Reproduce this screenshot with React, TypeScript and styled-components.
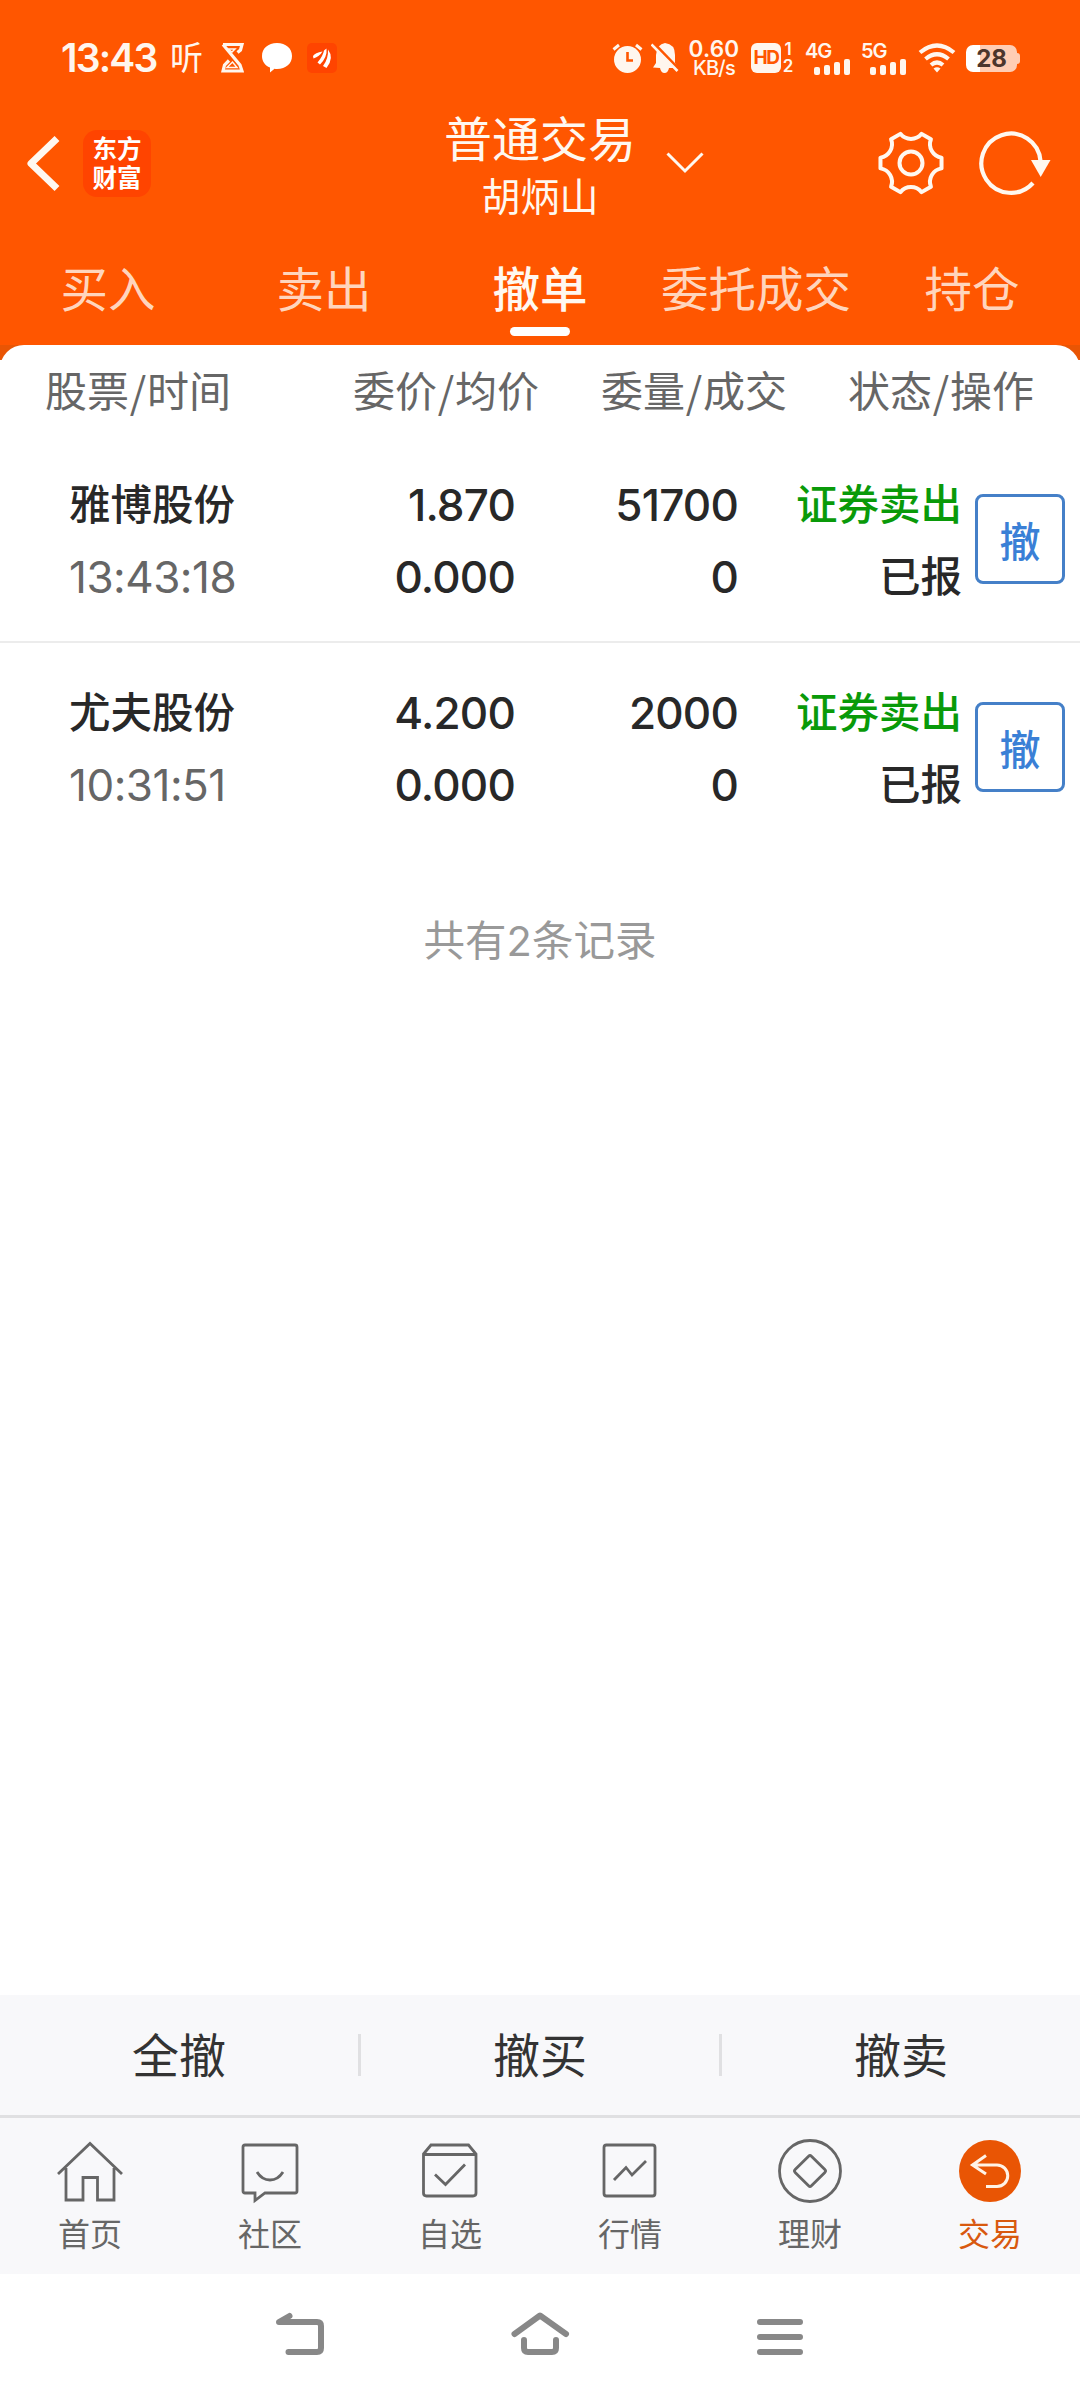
import React from 'react';
import styled, { createGlobalStyle } from 'styled-components';

const GlobalStyle = createGlobalStyle`
  * { box-sizing: border-box; }
  body {
    margin: 0;
    background: #fff;
    font-family: Inter, 'Noto Sans CJK SC', sans-serif;
    color: #282828;
  }
  svg { display: block; flex: none; }
`;

const Screen = styled.div`
  width: 1080px;
  height: 2400px;
  display: flex;
  flex-direction: column;
  background: #fff;
  overflow: hidden;
`;

const Top = styled.header`
  background: #ff5600;
  height: 345px;
  flex: none;
  display: flex;
  flex-direction: column;
`;

const StatusBar = styled.div`
  height: 100px;
  padding: 16px 60px 0 61px;
  display: flex;
  align-items: center;
  justify-content: space-between;
  color: #fff6ee;
`;

const StatusGroup = styled.div`
  display: flex;
  align-items: center;
`;

const Clock = styled.span`
  font-size: 39px;
  font-weight: 600;
  line-height: 40px;
  letter-spacing: -1.8px;
  width: 109px;
`;

const Gap = styled.span<{ $w: number }>`
  width: ${(p) => p.$w}px;
  flex: none;
`;

const ThinGlyph = styled.span`
  font-size: 33px;
  font-weight: 400;
  line-height: 32px;
  width: 51px;
`;

const Speed = styled.div`
  width: 52px;
  display: flex;
  flex-direction: column;
  align-items: center;
  font-weight: 600;
  line-height: 18px;
  font-size: 22.5px;
  letter-spacing: 0.2px;
`;

const SpeedValue = styled.span`
  font-size: 22.5px;
  height: 18px;
`;

const SpeedUnit = styled.span`
  font-size: 20px;
  height: 18px;
  line-height: 20px;
  font-weight: 500;
  letter-spacing: -0.8px;
`;

const HdBox = styled.span`
  width: 30px;
  height: 30px;
  border-radius: 6px;
  background: #fff6ee;
  color: #ff5600;
  font-size: 19px;
  font-weight: 700;
  letter-spacing: -1.4px;
  line-height: 30px;
  text-align: center;
`;

const SimNumbers = styled.span`
  width: 14px;
  display: flex;
  flex-direction: column;
  align-items: center;
  font-size: 17px;
  font-weight: 600;
  line-height: 17px;
`;

const Signal = styled.div`
  width: 45px;
  height: 33px;
  display: flex;
  flex-direction: column;
  align-items: flex-start;
  justify-content: space-between;
  font-size: 20px;
  font-weight: 600;
  letter-spacing: -1px;
  line-height: 18px;
`;

const Bars = styled.span`
  display: flex;
  align-items: flex-end;
  align-self: flex-end;
  gap: 4px;
  height: 17px;
  margin-top: -4px;
`;

const Bar = styled.i<{ $h: number }>`
  width: 6px;
  height: ${(p) => p.$h}px;
  border-radius: 2px;
  background: #fff6ee;
`;

const Battery = styled.span`
  width: 51px;
  height: 27px;
  border-radius: 7px;
  background: linear-gradient(90deg, #fff 0 28%, #ffcdb4 28%);
  color: #4d352c;
  font-size: 24px;
  font-weight: 700;
  line-height: 27px;
  text-align: center;
`;

const BatteryTip = styled.span`
  width: 3px;
  height: 11px;
  border-radius: 0 3px 3px 0;
  background: #ffcdb4;
`;

const TitleBar = styled.div`
  height: 140px;
  flex: none;
  display: grid;
  grid-template-columns: 400px 265px 415px;
`;

const TitleLeft = styled.div`
  display: flex;
  align-items: flex-start;
  padding: 30px 0 0 25px;
`;

const Logo = styled.div`
  width: 68px;
  height: 67px;
  margin-left: 22px;
  border-radius: 14px;
  background: #ff4400;
  color: #fff;
  display: flex;
  flex-direction: column;
  align-items: center;
  justify-content: center;
  gap: 1px;
  font-size: 24.5px;
  font-weight: 700;
  line-height: 28px;
`;

const LogoLine = styled.span`
  height: 28px;
  overflow: hidden;
`;

const TitleText = styled.div`
  display: flex;
  flex-direction: column;
  align-items: center;
  width: 280px;
  color: #fff8f0;
`;

const Title = styled.h1`
  margin: 15px 0 0;
  font-size: 48px;
  font-weight: 400;
  line-height: 50px;
  white-space: nowrap;
`;

const Subtitle = styled.div`
  margin-top: 9px;
  font-size: 39px;
  line-height: 46px;
`;

const TitleRight = styled.div`
  display: flex;
  align-items: flex-start;
  padding-top: 27px;
`;

const Tabs = styled.nav`
  height: 105px;
  display: grid;
  grid-template-columns: repeat(5, 216px);
`;

const Tab = styled.div<{ $active?: boolean }>`
  display: flex;
  flex-direction: column;
  align-items: center;
  padding-top: 25px;
  font-size: 47.500px;
  line-height: 50px;
  white-space: nowrap;
  font-weight: ${(p) => (p.$active ? 500 : 400)};
  color: ${(p) => (p.$active ? '#fff8f0' : '#ffd5bd')};
`;

const TabMark = styled.span`
  width: 60px;
  height: 9px;
  margin-top: 12px;
  border-radius: 5px;
  background: #fff;
`;

const SheetBack = styled.main`
  flex: 1;
  background: linear-gradient(#e95504 0 15px, #fff 15px);
`;

const Sheet = styled.section`
  background: #fff;
  border-radius: 24px 24px 0 0;
  height: 100%;
`;

const columns = `
  display: grid;
  white-space: nowrap;
`;

const TableHead = styled.div`
  ${columns}
  grid-template-columns: 231px 308px 248px 247px;
  height: 90px;
  padding-top: 16px;
  font-size: 42px;
  line-height: 62px;
  color: #666;
`;

const HeadCell = styled.span<{ $left?: boolean }>`
  display: flex;
  align-items: center;
  height: 62px;
  justify-content: ${(p) => (p.$left ? 'flex-start' : 'flex-end')};
  padding-left: ${(p) => (p.$left ? 45 : 0)}px;
`;

const Slash = styled.span`
  width: 18px;
  text-align: center;
  font-family: 'Noto Sans CJK SC', sans-serif;
  margin-top: -4px;
`;

const Row = styled.div<{ $last?: boolean }>`
  ${columns}
  grid-template-columns: 300px 214px 223px 225px 103px;
  height: 208px;
  padding-top: 34px;
  border-bottom: 2px solid ${(p) => (p.$last ? 'transparent' : '#ececec')};
`;

const Cell = styled.div<{ $left?: boolean }>`
  display: flex;
  flex-direction: column;
  align-items: ${(p) => (p.$left ? 'flex-start' : 'flex-end')};
  padding-left: ${(p) => (p.$left ? 69 : 0)}px;
  font-size: 41.500px;
  font-weight: 500;
  line-height: 72px;
`;

const Num = styled.span`
  font-size: 44px;
  font-weight: 500;
  letter-spacing: -0.8px;
  margin-right: -1px;
`;

const Time = styled(Num)`
  font-weight: 400;
  color: #666;
  letter-spacing: -0.5px;
`;

const SellText = styled.span`
  color: #099a09;
`;

const CancelButton = styled.button`
  width: 90px;
  height: 90px;
  margin: 25px 0 0 13px;
  padding: 0;
  border: 3px solid #4580c8;
  border-radius: 8px;
  background: #fff;
  color: #3a80d6;
  font: 500 41px Inter, 'Noto Sans CJK SC', sans-serif;
`;

const Summary = styled.p`
  margin: 65px 0 0;
  text-align: center;
  font-size: 41.500px;
  line-height: 50px;
  color: #999;
`;

const BulkBar = styled.div`
  height: 123px;
  flex: none;
  display: grid;
  grid-template-columns: 361px 361px 358px;
  align-items: center;
  background: #f8f8fa;
  border-bottom: 3px solid #e0e0e2;
`;

const BulkAction = styled.div`
  height: 42px;
  border-right: 3px solid #e0e0e2;
  text-align: center;
  font-size: 47px;
  line-height: 44px;
  color: #333;
  &:last-child { border-right: 0; }
`;

const BottomNav = styled.nav`
  height: 156px;
  flex: none;
  display: grid;
  grid-template-columns: repeat(6, 180px);
  background: #f8f8fa;
`;

const NavItem = styled.div<{ $active?: boolean }>`
  display: flex;
  flex-direction: column;
  align-items: center;
  padding-top: 21px;
  font-size: 32px;
  line-height: 40px;
  color: ${(p) => (p.$active ? '#d8590f' : '#666')};
`;

const NavLabel = styled.span`
  margin-top: 10px;
`;

const SystemNav = styled.div`
  height: 126px;
  flex: none;
  display: flex;
  justify-content: center;
  padding-top: 34px;
  gap: 180px;
`;

function gearPath() {
  const point = (deg: number) => {
    const a = (deg * Math.PI) / 180;
    return `${(31 * Math.cos(a)).toFixed(2)} ${(31 * Math.sin(a)).toFixed(2)}`;
  };
  let d = `M${point(-10)}`;
  for (let k = 0; k < 6; k++) {
    d += `L${point(60 * k + 10)}A13.6 13.6 0 0 0 ${point(60 * k + 50)}`;
  }
  return d + 'Z';
}

const Gear = () => (
  <svg width="72" height="72" viewBox="-36 -36 72 72" fill="none" stroke="#fff8f0" strokeWidth="4" strokeLinejoin="round">
    <path d={gearPath()} />
    <circle r="11.5" />
  </svg>
);

const Refresh = () => (
  <svg width="76" height="72" viewBox="-34 -36 76 72" fill="none" stroke="#fff8f0" strokeWidth="4.2">
    <path d="M22 20A29.6 29.6 0 1 1 29.5 -2" />
    <path d="M20 -3H39.5L29.7 14Z" fill="#fff8f0" stroke="none" />
  </svg>
);

const navIcons: Record<string, React.ReactNode> = {
  首页: (
    <path d="M2 35L34 4.500L66 35M10 29V61H27V38.500H41.500V61H58V29" />
  ),
  社区: (
    <path d="M9 6H59Q61 6 61 8V52Q61 54 59 54H29L19 61.500V54H9Q7 54 7 52V8Q7 6 9 6ZM21 33Q26 41 34 41Q42 41 47 33" />
  ),
  自选: (
    <path d="M7.500 15L15 6H52.500L60 15V54Q60 57 57 57H10.500Q7.500 57 7.500 54ZM7.500 15.500H60M19 35.500L29.500 45.500L49 25.500" />
  ),
  行情: (
    <>
      <rect x="8" y="6" width="51" height="51" rx="2.500" />
      <path d="M18 41L30 28.500L36 36L50 22" />
    </>
  ),
  理财: (
    <>
      <circle cx="34" cy="32" r="30.500" />
      <rect x="22.500" y="20.500" width="23" height="23" rx="2" transform="rotate(45 34 32)" />
    </>
  ),
  交易: (
    <>
      <circle cx="34" cy="32" r="31" fill="#e95504" stroke="none" />
      <path d="M30 16.500L16.500 26L30 35M17 26H41A10.500 10.500 0 0 1 41 47.500H30" stroke="#fff3e6" strokeWidth="3" />
    </>
  ),
};

const orders = [
  { name: '雅博股份', time: '13:43:18', price: '1.870', avg: '0.000', qty: '51700', filled: '0' },
  { name: '尤夫股份', time: '10:31:51', price: '4.200', avg: '0.000', qty: '2000', filled: '0' },
];

const Head = ({ a, b, left }: { a: string; b: string; left?: boolean }) => (
  <HeadCell $left={left}>
    <span>{a}</span>
    <Slash>/</Slash>
    <span>{b}</span>
  </HeadCell>
);

const SignalMeter = ({ label }: { label: string }) => (
  <Signal>
    {label}
    <Bars>
      {[8, 10, 13, 16].map((h) => (
        <Bar key={h} $h={h} />
      ))}
    </Bars>
  </Signal>
);

export default function App() {
  return (
    <Screen>
      <GlobalStyle />
      <Top>
        <StatusBar>
          <StatusGroup>
            <Clock>13:43</Clock>
            <ThinGlyph>听</ThinGlyph>
            <svg width="23" height="30" viewBox="0 0 23 30">
              <path
                d="M2 1.500H21L19.500 7L16.500 9.500M2 1.500L19 22L21 28H2L3.500 22L8 17.500"
                fill="none"
                stroke="#fff6ee"
                strokeWidth="3.200"
              />
              <path d="M7 6H14L11 9ZM6 24.500L11.500 19L16 24.500Z" fill="none" stroke="#fff6ee" strokeWidth="1.500" />
            </svg>
            <Gap $w={18} />
            <svg width="30" height="30" viewBox="0 0 30 30" fill="#fff">
              <path d="M15 0C24 0 30 5.500 30 13S24 26 15 26Q13.500 26 12.500 25.800L8 29.500V24.500C3 22.500 0 18.500 0 13C0 5.500 6 0 15 0Z" />
            </svg>
            <Gap $w={15} />
            <svg width="30" height="30" viewBox="0 0 30 30">
              <rect width="30" height="30" rx="5" fill="#ff4400" />
              <g fill="#fff">
                <path d="M6 13Q8 9.500 15.500 8.500Q12.500 13.500 6.500 15.500Z" />
                <path d="M10.500 19.500Q16 13 17 7.500L19.500 5.500Q20.500 14 13 21.500Z" />
                <path d="M16 23Q21.500 16 21 6.500Q27.500 15 19.500 25Z" />
              </g>
            </svg>
          </StatusGroup>
          <StatusGroup>
            <svg width="31" height="30" viewBox="0 0 31 30">
              <circle cx="15.500" cy="16.500" r="13.500" fill="#fff6ee" />
              <path d="M1.500 6.500L7 2M24 2L29.500 6.500" stroke="#fff6ee" strokeWidth="3" />
              <path d="M15.500 9V17.500H21" stroke="#ff5600" strokeWidth="2.600" fill="none" />
            </svg>
            <Gap $w={8} />
            <svg width="28" height="30" viewBox="0 0 28 30">
              <path d="M2 24.500L5 20V12Q6 1 14 0Q24 1 24 12V20L27 25H18Q17 30 13.500 30T9 25Z" fill="#fff6ee" />
              <path d="M2.500 0L28 26.500" stroke="#ff5600" strokeWidth="3" />
              <path d="M0.500 1.500L26.500 28" stroke="#fff6ee" strokeWidth="2.600" />
            </svg>
            <Gap $w={9} />
            <Speed>
              <SpeedValue>0.60</SpeedValue>
              <SpeedUnit>KB/s</SpeedUnit>
            </Speed>
            <Gap $w={11} />
            <HdBox>HD</HdBox>
            <SimNumbers>
              <span>1</span>
              <span>2</span>
            </SimNumbers>
            <Gap $w={10} />
            <SignalMeter label="4G" />
            <Gap $w={11} />
            <SignalMeter label="5G" />
            <Gap $w={12} />
            <svg width="38" height="30" viewBox="0 0 38 30" fill="none" stroke="#fff6ee" strokeWidth="4.200">
              <path d="M2 9.500Q19 -4.500 36 9.500M7.500 16Q19 6.500 30.500 16M13 22Q19 17 25 22" />
              <path d="M15.500 25.500Q19 23 22.500 25.500L19 29.500Z" fill="#fff6ee" stroke="none" />
            </svg>
            <Gap $w={10} />
            <Battery>28</Battery>
            <BatteryTip />
          </StatusGroup>
        </StatusBar>
        <TitleBar>
          <TitleLeft>
            <svg width="36" height="66" viewBox="0 0 36 66" fill="none" stroke="#fff8f0" strokeWidth="7" strokeLinejoin="round">
              <path d="M32 8.500L6 33.500L32 58.500" />
            </svg>
            <Logo>
              <LogoLine>东方</LogoLine>
              <LogoLine>财富</LogoLine>
            </Logo>
          </TitleLeft>
          <TitleText>
            <Title>普通交易</Title>
            <Subtitle>胡炳山</Subtitle>
          </TitleText>
          <TitleRight>
            <svg width="40" height="72" viewBox="664 127 40 72" fill="none" stroke="#fff8f0" strokeWidth="3">
              <path d="M666.500 153.500L684 171L701.500 153.500" />
            </svg>
            <Gap $w={170} />
            <Gear />
            <Gap $w={30} />
            <Refresh />
          </TitleRight>
        </TitleBar>
        <Tabs>
          <Tab>买入</Tab>
          <Tab>卖出</Tab>
          <Tab $active>
            撤单
            <TabMark />
          </Tab>
          <Tab>委托成交</Tab>
          <Tab>持仓</Tab>
        </Tabs>
      </Top>
      <SheetBack>
        <Sheet>
          <TableHead>
            <Head a="股票" b="时间" left />
            <Head a="委价" b="均价" />
            <Head a="委量" b="成交" />
            <Head a="状态" b="操作" />
          </TableHead>
          {orders.map((o, i) => (
            <Row key={o.time} $last={i === orders.length - 1}>
              <Cell $left>
                <span>{o.name}</span>
                <Time>{o.time}</Time>
              </Cell>
              <Cell>
                <Num>{o.price}</Num>
                <Num>{o.avg}</Num>
              </Cell>
              <Cell>
                <Num>{o.qty}</Num>
                <Num>{o.filled}</Num>
              </Cell>
              <Cell>
                <SellText>证券卖出</SellText>
                <span>已报</span>
              </Cell>
              <CancelButton>撤</CancelButton>
            </Row>
          ))}
          <Summary>共有2条记录</Summary>
        </Sheet>
      </SheetBack>
      <BulkBar>
        <BulkAction>全撤</BulkAction>
        <BulkAction>撤买</BulkAction>
        <BulkAction>撤卖</BulkAction>
      </BulkBar>
      <BottomNav>
        {Object.entries(navIcons).map(([label, icon]) => (
          <NavItem key={label} $active={label === '交易'}>
            <svg width="68" height="66" viewBox="0 0 68 66" fill="none" stroke="#666" strokeWidth="2.800">
              {icon}
            </svg>
            <NavLabel>{label}</NavLabel>
          </NavItem>
        ))}
      </BottomNav>
      <SystemNav>
        <svg width="60" height="56" viewBox="270 2308 60 56" fill="none" stroke="#888" strokeWidth="6" strokeLinecap="round" strokeLinejoin="round">
          <path d="M288.500 2352H317Q321 2352 321 2348V2326Q321 2322 317 2322H279L289.500 2316" />
        </svg>
        <svg width="60" height="56" viewBox="510 2308 60 56" fill="none" stroke="#888" strokeWidth="6" strokeLinecap="round" strokeLinejoin="round">
          <path d="M514.500 2334L540 2315.500L566 2334M524 2340V2348Q524 2352 528 2352H552Q556 2352 556 2348V2340" />
        </svg>
        <svg width="60" height="56" viewBox="750 2308 60 56" fill="none" stroke="#888" strokeWidth="6" strokeLinecap="round">
          <path d="M760 2322H800M760 2337H800M760 2352H800" />
        </svg>
      </SystemNav>
    </Screen>
  );
}
